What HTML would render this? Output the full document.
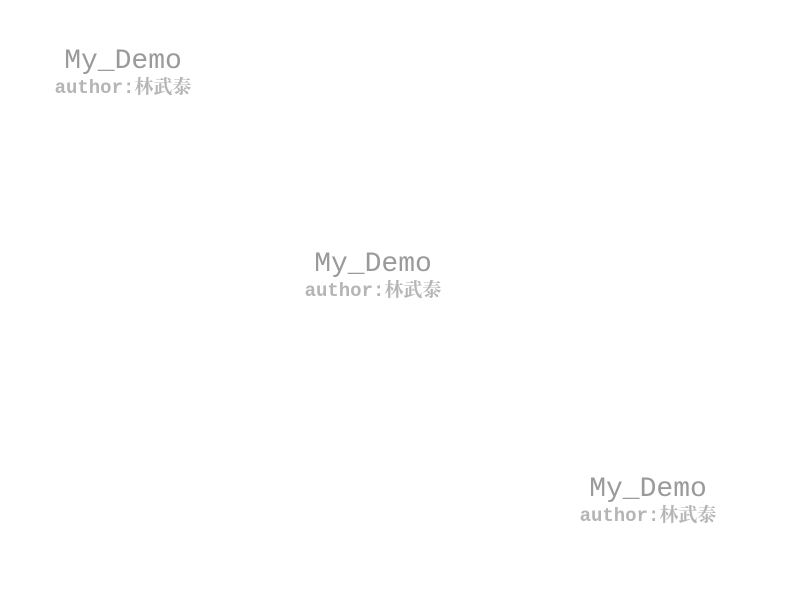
<!DOCTYPE html>
<html><head><meta charset="utf-8"><style>
html,body{margin:0;width:800px;height:600px;background:#fff;overflow:hidden}
.w{position:absolute;width:200px;text-align:center;font-family:"Liberation Mono","Noto Serif CJK SC",monospace;white-space:nowrap}
.t{font-size:28px;color:#9a9a9a;line-height:30px;height:30px}
.a{font-size:19px;color:#b5b5b5;line-height:22px;font-weight:bold}
</style></head><body>
<div class="w" style="left:23px;top:47px"><div class="t">My_Demo</div><div class="a">author:林武泰</div></div>
<div class="w" style="left:273px;top:250px"><div class="t">My_Demo</div><div class="a">author:林武泰</div></div>
<div class="w" style="left:548px;top:475px"><div class="t">My_Demo</div><div class="a">author:林武泰</div></div>
</body></html>
